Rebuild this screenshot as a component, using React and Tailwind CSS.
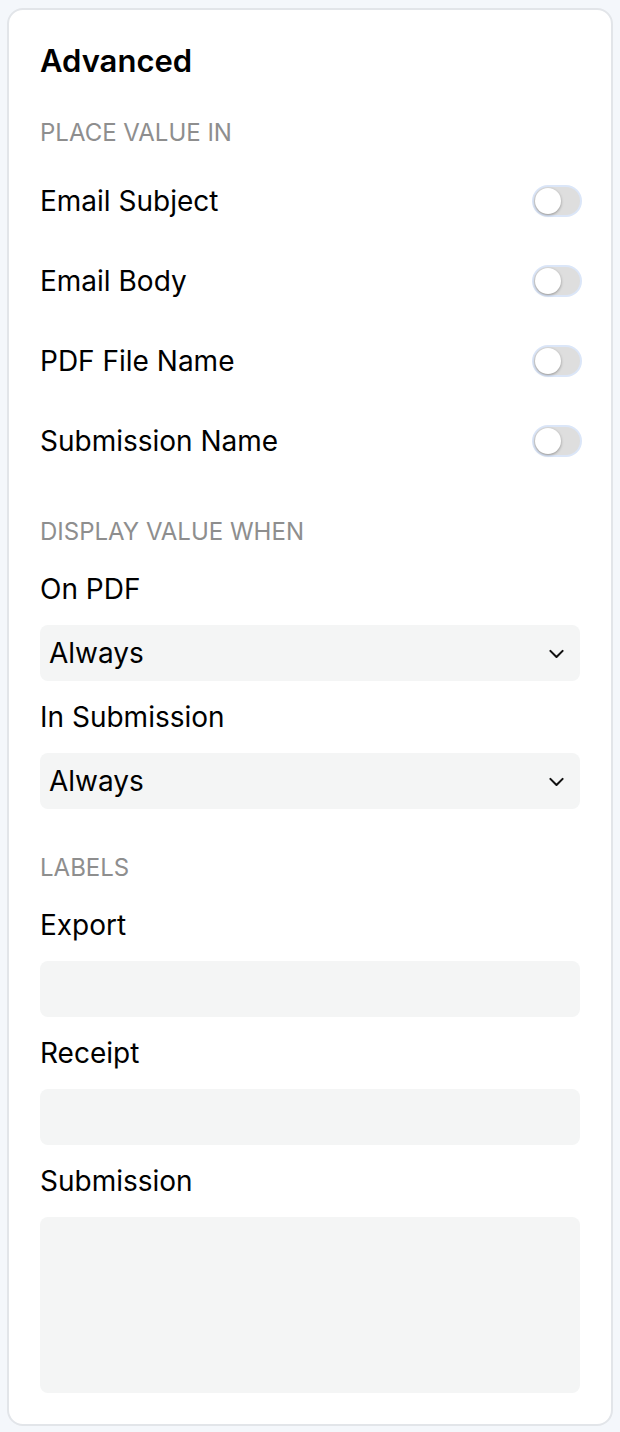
import { useState } from "react";

const FONT = { fontFamily: "Inter, 'Noto Sans', sans-serif" };

function Toggle({ on, onChange }) {
  return (
    <button
      onClick={() => onChange(!on)}
      className={`relative h-[28px] w-[46px] shrink-0 rounded-full ring-2 ring-[#dbe6f8] ${
        on ? "bg-[#3b82f6]" : "bg-[#dedede]"
      }`}
    >
      <span
        className={`absolute top-[1px] h-[26px] w-[26px] rounded-full bg-white shadow-[0_1px_3px_rgba(0,0,0,0.35)] ${
          on ? "left-[19px]" : "left-[1px]"
        }`}
      />
    </button>
  );
}

function Chevron() {
  return (
    <svg width="21" height="21" viewBox="0 0 24 24" fill="none" stroke="#111" strokeWidth="2.4" strokeLinecap="round" strokeLinejoin="round">
      <path d="m5 9 7 7 7-7" />
    </svg>
  );
}

function Select({ value }) {
  return (
    <div className="flex h-[56px] items-center justify-between rounded-[8px] bg-[#f4f5f5] pl-[9px] pr-[13px] text-[28px] text-black">
      <span>{value}</span>
      <Chevron />
    </div>
  );
}

const PLACES = ["Email Subject", "Email Body", "PDF File Name", "Submission Name"];

export default function App() {
  const [toggles, setToggles] = useState({});

  return (
    <div className="min-h-[1432px] bg-[#f4f7fb] px-[7px] pt-[8px] pb-[6px]" style={FONT}>
      <div className="rounded-[16px] border-2 border-[#e2e5e9] bg-white px-[31px] pt-[31px] pb-[31px]">
        <h1 className="text-[31px] font-semibold leading-[40px] text-black">Advanced</h1>

        <p className="mt-[36px] text-[24px] uppercase leading-[32px] text-[#8e8e8e]">Place value in</p>
        <div className="mt-[36px] flex flex-col gap-[48px]">
          {PLACES.map((p) => (
            <div key={p} className="flex h-[32px] items-center justify-between">
              <span className="text-[28px] text-black">{p}</span>
              <Toggle on={!!toggles[p]} onChange={(v) => setToggles({ ...toggles, [p]: v })} />
            </div>
          ))}
        </div>

        <p className="mt-[59px] text-[24px] uppercase leading-[32px] text-[#8e8e8e]">Display value when</p>
        <p className="mt-[23px] text-[28px] leading-[36px] text-black">On PDF</p>
        <div className="mt-[18px]">
          <Select value="Always" />
        </div>
        <p className="mt-[18px] text-[28px] leading-[36px] text-black">In Submission</p>
        <div className="mt-[18px]">
          <Select value="Always" />
        </div>

        <p className="mt-[43px] text-[24px] uppercase leading-[32px] text-[#8e8e8e]">Labels</p>
        <p className="mt-[23px] text-[28px] leading-[36px] text-black">Export</p>
        <div className="mt-[18px] h-[56px] rounded-[8px] bg-[#f4f5f5]" />
        <p className="mt-[18px] text-[28px] leading-[36px] text-black">Receipt</p>
        <div className="mt-[18px] h-[56px] rounded-[8px] bg-[#f4f5f5]" />
        <p className="mt-[18px] text-[28px] leading-[36px] text-black">Submission</p>
        <div className="mt-[18px] h-[176px] rounded-[8px] bg-[#f4f5f5]" />
      </div>
    </div>
  );
}
